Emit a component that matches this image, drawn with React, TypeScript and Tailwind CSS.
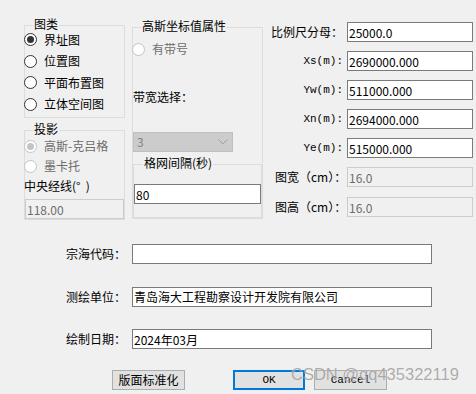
import type { ReactNode } from 'react';

// Windows-style dialog: 图类 / 投影 / 高斯坐标值属性 settings

function GroupBox({
  title,
  className = '',
  titleClass = 'ml-[8px]',
  children,
}: {
  title: string;
  className?: string;
  titleClass?: string;
  children?: ReactNode;
}) {
  return (
    <div className={`border border-[#dcdcdc] flex flex-col ${className}`}>
      <div className={`-mt-[9px] w-fit px-[1px] bg-[#f0f0f0] leading-[14px] ${titleClass}`}>{title}</div>
      {children}
    </div>
  );
}

function Radio({
  label,
  checked = false,
  disabled = false,
  className = '',
}: {
  label: string;
  checked?: boolean;
  disabled?: boolean;
  className?: string;
}) {
  return (
    <div className={`flex items-center -ml-[1px] gap-[7px] ${className}`}>
      <span
        className={`w-[13px] h-[13px] rounded-full border bg-white flex items-center justify-center ${
          disabled ? 'border-[#c4c4c4]' : 'border-[#333333]'
        }`}
      >
        {checked && (
          <span className={`w-[7px] h-[7px] rounded-full ${disabled ? 'bg-[#c4c4c4]' : 'bg-[#333333]'}`} />
        )}
      </span>
      <span className={disabled ? 'text-[#6d6d6d]' : 'text-black'}>{label}</span>
    </div>
  );
}

function Field({ value, disabled = false, className = '' }: { value: string; disabled?: boolean; className?: string }) {
  return (
    <input
      readOnly
      value={value}
      className={`h-[20px] px-[1px] text-[12px] outline-none border ${
        disabled ? 'border-[#cccccc] bg-[#f0f0f0] text-[#6d6d6d]' : 'border-[#7a7a7a] bg-white text-black'
      } ${className}`}
    />
  );
}

const coords = [
  { label: 'Xs(m):', value: '2690000.000' },
  { label: 'Yw(m):', value: '511000.000' },
  { label: 'Xn(m):', value: '2694000.000' },
  { label: 'Ye(m):', value: '515000.000' },
];

const infoRows = [
  { label: '宗海代码：', value: '' },
  { label: '测绘单位：', value: '青岛海大工程勘察设计开发院有限公司' },
  { label: '绘制日期：', value: '2024年03月' },
];

export default function App() {
  return (
    <div className="w-[476px] h-[394px] bg-[#f0f0f0] relative overflow-hidden font-['Noto_Sans_CJK_SC',sans-serif] text-[12px] leading-[14px] text-black">
      <div className="flex items-start">
        {/* left column */}
        <div className="ml-[24px] mt-[25px] w-[101px] flex flex-col">
          <GroupBox title="图类" className="h-[93px]">
            <div className="-mt-[2px] flex flex-col">
              {['界址图', '位置图', '平面布置图', '立体空间图'].map((t, i) => (
                <Radio key={t} label={t} checked={i === 0} className="h-[21.5px]" />
              ))}
            </div>
          </GroupBox>
          <GroupBox title="投影" className="mt-[12px] h-[90px]">
            <Radio label="高斯-克吕格" checked disabled className="h-[20.5px]" />
            <Radio label="墨卡托" disabled className="h-[20.5px]" />
            <div className="-ml-[1px] h-[20px] flex items-center whitespace-pre">中央经线(°  )</div>
            <Field value="118.00" disabled className="mt-[3px] h-[19px] w-full" />
          </GroupBox>
        </div>

        {/* middle column */}
        <GroupBox title="高斯坐标值属性" className="ml-[7px] mt-[27px] w-[131px] h-[192px]">
          <Radio label="有带号" disabled className="mt-[6px] h-[20px]" />
          <div className="mt-[30px] h-[16px] flex items-center">带宽选择：</div>
          <div className="mt-[27px] w-[100px] h-[20px] bg-[#cccccc] border border-[#bfbfbf] flex items-center justify-between pl-[3px] pr-[4px] text-[#838383]">
            <span>3</span>
            <svg width="10" height="6" viewBox="0 0 10 6" fill="none">
              <polyline points="0.5,0.5 5,5 9.5,0.5" stroke="#a0a0a0" strokeWidth="1" />
            </svg>
          </div>
          <GroupBox title="格网间隔(秒)" titleClass="ml-[9px]" className="mt-[12px] h-[54px]">
            <Field value="80" className="mt-[14px] w-full" />
          </GroupBox>
        </GroupBox>

        {/* right column */}
        <div className="ml-[6px] mt-[22px] flex flex-col gap-[9px]">
          <div className="flex items-center">
            <span className="w-[78px] text-right pr-[4px] whitespace-nowrap">比例尺分母：</span>
            <Field value="25000.0" className="w-[126px]" />
          </div>
          {coords.map((c) => (
            <div key={c.label} className="flex items-center">
              <span className="w-[78px] text-right pr-[4px] font-['Liberation_Mono',monospace] text-[11px]">
                {c.label}
              </span>
              <Field value={c.value} className="w-[126px]" />
            </div>
          ))}
          <div className="flex items-center">
            <span className="ml-[6px] w-[72px] whitespace-nowrap">图宽（cm）：</span>
            <Field value="16.0" disabled className="w-[126px]" />
          </div>
          <div className="flex items-center mt-[1px]">
            <span className="ml-[6px] w-[72px] whitespace-nowrap">图高（cm）：</span>
            <Field value="16.0" disabled className="w-[126px]" />
          </div>
        </div>
      </div>

      {/* info rows */}
      <div className="mt-[24px] flex flex-col gap-[22.5px]">
        {infoRows.map((r) => (
          <div key={r.label} className="flex items-center h-[20px]">
            <span className="ml-[66px] w-[66px]">{r.label}</span>
            <Field value={r.value} className="w-[300px]" />
          </div>
        ))}
      </div>

      {/* buttons */}
      <div className="mt-[21px] flex">
        <button className="ml-[112px] w-[73px] h-[20px] bg-[#e1e1e1] border border-[#adadad] flex items-center justify-center">
          版面标准化
        </button>
        <button className="ml-[48px] w-[72px] h-[20px] bg-[#e1e1e1] border-2 border-[#0078d7] flex items-center justify-center font-['Liberation_Mono',monospace] text-[11px]">
          OK
        </button>
        <button className="ml-[9px] w-[73px] h-[20px] bg-[#e1e1e1] border border-[#adadad] flex items-center justify-center font-['Liberation_Mono',monospace] text-[11px]">
          Cancel
        </button>
      </div>

      {/* watermark */}
      <div className="absolute left-[291px] top-[364px] font-['Liberation_Sans',sans-serif] text-[16.5px] leading-[20px] text-[#9a9a9a] opacity-80 [text-shadow:0_0_1px_#ffffff] whitespace-nowrap pointer-events-none">
        CSDN @qq435322119
      </div>
    </div>
  );
}
